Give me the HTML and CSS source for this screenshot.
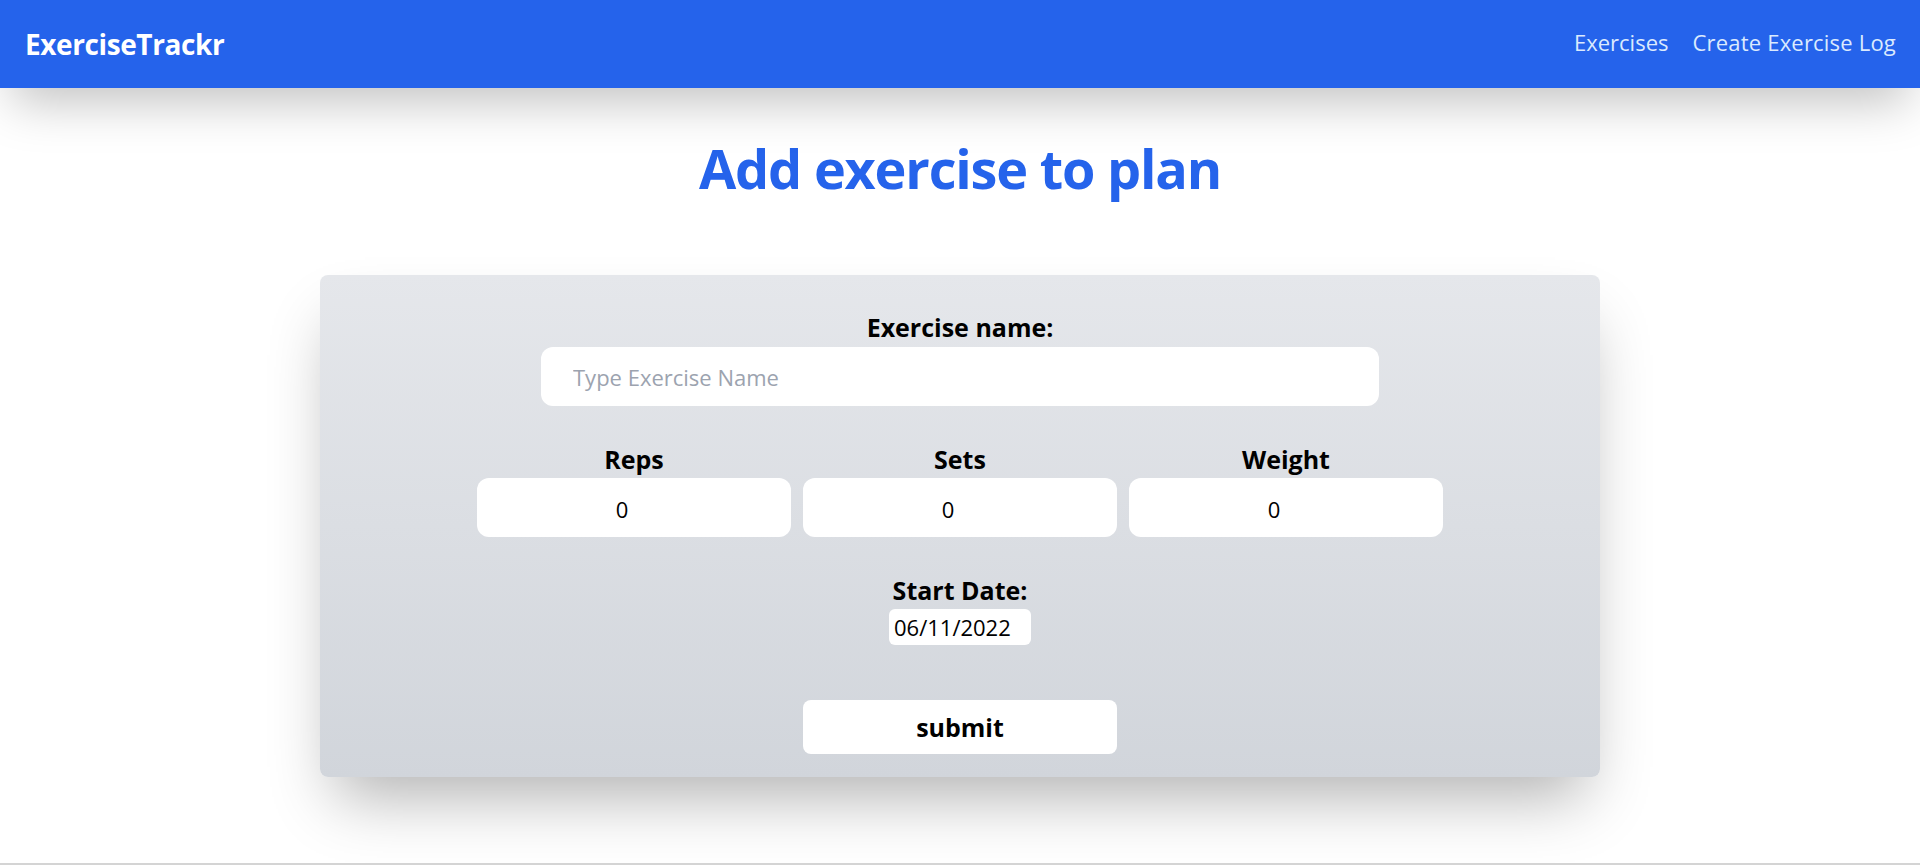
FILE: index.html
```html
<!DOCTYPE html>
<html lang="en">
<head>
<meta charset="utf-8">
<title>ExerciseTrackr</title>
<link rel="stylesheet" href="styles.css">
</head>
<body>
<div class="page">
  <nav class="navbar">
    <a class="brand" href="#">ExerciseTrackr</a>
    <div class="nav-links">
      <a class="nav-link" href="#">Exercises</a>
      <a class="nav-link" href="#">Create Exercise Log</a>
    </div>
  </nav>
  <main class="main">
    <h1 class="title">Add exercise to plan</h1>
    <form class="card">
      <div class="field field-name">
        <label class="label" for="name">Exercise name:</label>
        <input class="input name-input" id="name" type="text" placeholder="Type Exercise Name">
      </div>
      <div class="numbers">
        <div class="field">
          <label class="label" for="reps">Reps</label>
          <input class="input num-input" id="reps" type="number" value="0">
        </div>
        <div class="field">
          <label class="label" for="sets">Sets</label>
          <input class="input num-input" id="sets" type="number" value="0">
        </div>
        <div class="field">
          <label class="label" for="weight">Weight</label>
          <input class="input num-input" id="weight" type="number" value="0">
        </div>
      </div>
      <div class="field field-date">
        <label class="label" for="date">Start Date:</label>
        <input class="date-input" id="date" type="text" value="06/11/2022">
      </div>
      <button class="submit" type="button">submit</button>
    </form>
  </main>
  <div class="bottom-line"></div>
</div>
</body>
</html>
```
FILE: styles.css
```css
* { box-sizing: border-box; }
html, body { margin: 0; padding: 0; background: #ffffff; }
body { font-family: "Open Sans", "Noto Sans", sans-serif; color: #000; overflow: hidden; }

.page { min-height: 100vh; display: flex; flex-direction: column; }

.navbar {
  height: 88px;
  background: #2563eb;
  display: flex;
  align-items: center;
  justify-content: space-between;
  padding: 0 24px 0 25px;
  box-shadow: 0 25px 50px -12px rgba(0, 0, 0, 0.25);
  position: relative;
  z-index: 2;
}
.brand {
  color: #ffffff;
  font-weight: 700;
  font-size: 28px;
  text-decoration: none;
  letter-spacing: -0.4px;
}
.nav-links { display: flex; gap: 24px; padding-bottom: 4px; }
.nav-link {
  color: #dbeafe;
  font-size: 22px;
  text-decoration: none;
}
.nav-link + .nav-link { letter-spacing: 0.2px; }

.main { display: flex; flex-direction: column; align-items: center; }

.title {
  margin: 50px 0 0;
  font-size: 54px;
  line-height: 60px;
  font-weight: 700;
  color: #2563eb;
  text-align: center;
  letter-spacing: -1.2px;
}

.card {
  margin-top: 77px;
  width: 1280px;
  border-radius: 8px;
  background: linear-gradient(to bottom, #e5e7eb, #d1d5db);
  box-shadow: 0 35px 60px -15px rgba(0, 0, 0, 0.3);
  padding: 36px 0 23px;
  display: flex;
  flex-direction: column;
  align-items: center;
}

.field { display: flex; flex-direction: column; align-items: center; }
.label {
  font-size: 25px;
  line-height: 32px;
  font-weight: 700;
  margin-bottom: 3px;
}
.field-name .label { margin-bottom: 4px; }

.input {
  border: none;
  outline: none;
  background: #ffffff;
  border-radius: 12px;
  height: 59px;
  font-family: inherit;
  font-size: 22px;
  color: #000;
}
.name-input { width: 838px; padding: 1px 32px 0; }
.name-input::placeholder { color: #9ca3af; }

.numbers { display: flex; gap: 12px; margin-top: 37px; }
.num-input {
  width: 314px;
  text-align: center;
  padding: 2px 24px 0 0;
  -moz-appearance: textfield;
  appearance: textfield;
}
.num-input::-webkit-inner-spin-button,
.num-input::-webkit-outer-spin-button { -webkit-appearance: none; margin: 0; }

.field-date { margin-top: 37px; }
.date-input {
  width: 142px;
  height: 36px;
  border: none;
  outline: none;
  background: #ffffff;
  border-radius: 6px;
  padding: 0 0 0 5px;
  font-family: inherit;
  font-size: 22px;
  color: #000;
}

.submit {
  margin-top: 55px;
  width: 314px;
  height: 54px;
  border: none;
  border-radius: 8px;
  background: #ffffff;
  font-family: inherit;
  font-size: 25px;
  font-weight: 700;
  color: #000;
  cursor: pointer;
}

.bottom-line {
  margin-top: auto;
  height: 2px;
  background: #d4d4d4;
}
```
